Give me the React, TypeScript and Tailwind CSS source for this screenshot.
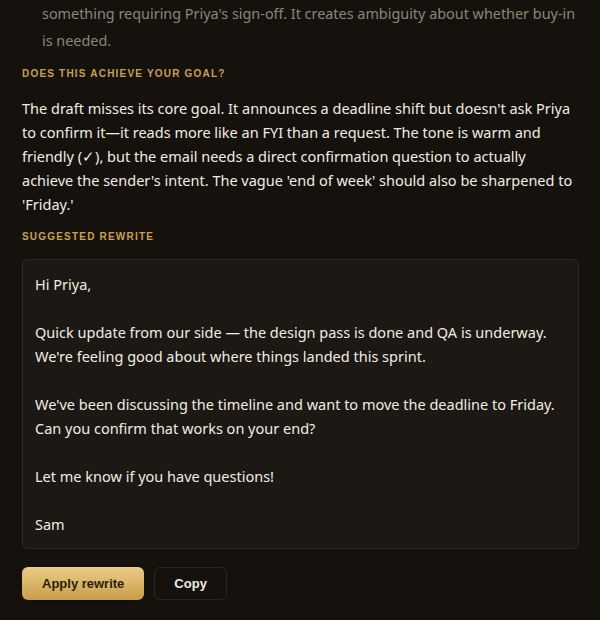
import React from "react";

const Label: React.FC<{ children: React.ReactNode; className?: string }> = ({
  children,
  className = "",
}) => (
  <div
    className={`text-[10px] leading-[15px] font-bold uppercase tracking-[0.12em] text-[#c9a04e] font-['Liberation_Sans',Arial,sans-serif] ${className}`}
  >
    {children}
  </div>
);

const emailBody = `Hi Priya,

Quick update from our side — the design pass is done and QA is underway.
We're feeling good about where things landed this sprint.

We've been discussing the timeline and want to move the deadline to Friday.
Can you confirm that works on your end?

Let me know if you have questions!

Sam`;

export default function App() {
  return (
    <div className="h-[620px] w-[600px] overflow-hidden bg-[#15120d] font-['Noto_Sans','Open_Sans',sans-serif]">
      <div className="pl-[22px] pr-[21px]">
        <p className="-mt-[27px] pl-5 text-[14.4px] leading-[27px] text-[#8d8577]">
          The email frames the deadline move as a settled decision rather than
          something requiring Priya's sign-off. It creates ambiguity about whether{" "}
          <span className="whitespace-nowrap">buy-in</span> is needed.
        </p>

        <Label className="mt-3">Does this achieve your goal?</Label>
        <p className="mt-[15px] text-[14.5px] leading-6 text-[#f1ece2]">
          The draft misses its core goal. It announces a deadline shift but
          doesn't ask Priya to confirm it—it reads more like an FYI than a
          request. The tone is warm and friendly (✓), but the email needs a
          direct confirmation question to actually achieve the sender's intent.
          The vague 'end of week' should also be sharpened to 'Friday.'
        </p>

        <Label className="mt-[13px]">Suggested rewrite</Label>
        <div className="mt-[15px] rounded-md border border-[#2e2a23] bg-[#1c1813] p-3">
          <div className="whitespace-pre-wrap text-[14.5px] leading-6 text-[#f1ece2]">
            {emailBody}
          </div>
        </div>

        <div className="mt-[18px] flex gap-[10px] font-['Liberation_Sans',Arial,sans-serif]">
          <button className="h-[33px] rounded-md bg-gradient-to-b from-[#ebcd86] to-[#c89d48] px-5 text-[13px] font-bold text-[#2a1f0c] shadow-sm">
            Apply rewrite
          </button>
          <button className="h-[33px] rounded-md border border-[#2a2620] px-[19px] text-[13px] font-bold text-[#f1ece2]">
            Copy
          </button>
        </div>
      </div>
    </div>
  );
}
